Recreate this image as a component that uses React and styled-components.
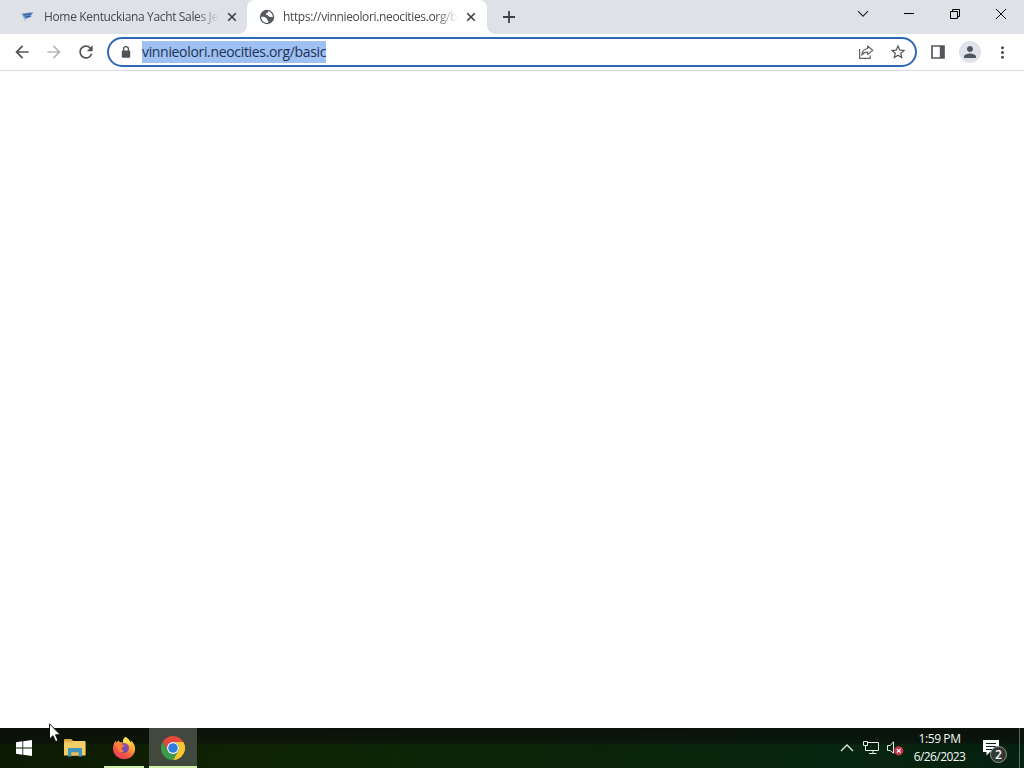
import React from "react";
import styled, { createGlobalStyle } from "styled-components";
import {
  MdArrowBack,
  MdArrowForward,
  MdMoreVert,
  MdPerson,
  MdRefresh,
  MdStarBorder,
} from "react-icons/md";

const CloseIcon = () => (
  <svg width="10" height="10" viewBox="0 0 10 10">
    <path d="M1.2 1.2L8.8 8.8M8.8 1.2L1.2 8.8" stroke="#3c4043" strokeWidth="1.6" />
  </svg>
);

const FlagIcon = () => (
  <svg width="16" height="16" viewBox="0 0 16 16">
    <path d="M1.5 4.4L13.6 3L11 6.4L11.6 7.8L5 10.2Z" fill="#7ba0cd" />
    <path d="M1.8 4.6L5.6 12" stroke="#a4b6cd" strokeWidth="0.9" />
    <path d="M3.4 6L11.4 4.8M5 8.2L10.4 7" stroke="#2f63a6" strokeWidth="1.5" />
  </svg>
);

const GlobeIcon = () => (
  <svg width="16" height="16" viewBox="0 0 16 16">
    <circle cx="8" cy="8" r="7.2" fill="#54585c" />
    <path d="M8.9 2C9.7 3.1 8.6 4 7.4 4.3C6.5 4.6 6.7 5.9 7.8 6.1C9.4 6.2 9.6 7.6 10.7 8C11.9 8.3 13.1 7.7 13.9 8.3C13.8 5.2 12 2.7 8.9 2Z" fill="#fff" />
    <path d="M2.1 7.8C3.9 7.7 6 7.9 7.3 9C8.3 9.9 7.9 10.9 8.9 11.4C9.7 11.9 9.6 13 8.7 13.9C5.1 14.2 2.2 11.5 2.1 7.8Z" fill="#fff" />
  </svg>
);

const LockIcon = () => (
  <svg width="14" height="14" viewBox="0 0 14 14">
    <path d="M4.6 6V4.1A2.4 2.4 0 0 1 9.4 4.1V6" fill="none" stroke="#505458" strokeWidth="1.3" />
    <rect x="2.8" y="5.4" width="8.4" height="7.4" rx="1" fill="#505458" />
  </svg>
);

const ShareIcon = () => (
  <svg width="18" height="18" viewBox="0 0 18 18" fill="none" stroke="#5f6368" strokeWidth="1.2">
    <path d="M2.6 6V15.3H13.2V12.6" />
    <path d="M10.6 3L15.7 7.3L10.6 11.6V9.2C7.8 9.1 6 10 4.7 12.1C5.1 8.6 7 6 10.6 5.5Z" strokeLinejoin="round" />
  </svg>
);

const SidePanelIcon = () => (
  <svg width="16" height="16" viewBox="0 0 16 16">
    <path d="M2 2H14V14H2Z" fill="none" stroke="#54585c" strokeWidth="1.7" />
    <path d="M9.8 2H14V14H9.8Z" fill="#54585c" />
  </svg>
);

const WindowsIcon = () => (
  <svg width="16" height="16" viewBox="0 0 16 16" fill="#fff">
    <path d="M0 2.2L6.4 1.3V7.6H0ZM7.2 1.2L16 0V7.6H7.2ZM0 8.4H6.4V14.7L0 13.8ZM7.2 8.4H16V16L7.2 14.8Z" />
  </svg>
);

const FolderIcon = () => (
  <svg width="24" height="20" viewBox="0 0 24 20">
    <path d="M1 3V1.8Q1 1 1.8 1H8.2L10.2 3Z" fill="#dba63e" />
    <path d="M1 3H21.8Q22.6 3 22.6 3.8V17.6H1Z" fill="#f3cd66" />
    <path d="M1 3H10.2L9 4.4H1Z" fill="#e6b54c" />
    <path d="M5 18.6V11Q5 10 6 10H18Q19 10 19 11V18.6H15.4V14.6H8.6V18.6Z" fill="#4395be" />
    <path d="M8.6 14.6H15.4V17.6H8.6Z" fill="#e9bd50" />
  </svg>
);

const FirefoxIcon = () => (
  <svg width="24" height="24" viewBox="0 0 24 24">
    <defs>
      <linearGradient id="flame" x1="0.85" y1="0" x2="0.25" y2="1">
        <stop offset="0" stopColor="#ffe14a" />
        <stop offset="0.4" stopColor="#ffa035" />
        <stop offset="0.72" stopColor="#f6543f" />
        <stop offset="1" stopColor="#e0386a" />
      </linearGradient>
      <linearGradient id="sphere" x1="0.8" y1="0" x2="0.3" y2="1">
        <stop offset="0" stopColor="#a24fa5" />
        <stop offset="1" stopColor="#5b4bb5" />
      </linearGradient>
    </defs>
    <path
      d="M13.2 1C16.6 2.3 17.6 4.6 18 6.6C18.9 6.2 18.9 5.2 18.8 4.5C21.6 6.7 23.3 9.7 23.1 13.2C22.8 19.2 18 23.2 12.2 23.2C5.8 23.2 1 18.4 1 12.6C1 9.5 2 6.8 3.8 4.4C3.8 5.3 4 6 4.5 6.7C5 5.8 5.8 5 6.9 4.3C6.9 5.3 7.3 6 8 6.5C9.2 6.2 10.1 6.3 11 6.6C10.8 4.5 11.6 2.4 13.2 1Z"
      fill="url(#flame)"
    />
    <circle cx="12" cy="12" r="5" fill="url(#sphere)" />
    <path d="M4.6 8.3C7.1 6.7 9.5 7.7 10.8 9.2L12.8 9.6C12.1 10.9 10.6 11 9.6 11.8C9.2 13.5 10.4 14.6 12.2 14.6C10.6 17 6.7 16.8 5.9 13.2Z" fill="#f8803a" />
    <path d="M13.2 1C16.6 2.3 19.4 6.4 19.4 10.7C17.6 7 13.9 7.4 11 6.6C10.8 4.5 11.6 2.4 13.2 1Z" fill="#ffdc4a" />
  </svg>
);

const ChromeIcon = () => (
  <svg width="24" height="24" viewBox="0 0 24 24">
    <path d="M1.6 6A12 12 0 0 1 22.4 6L12 6A6 6 0 0 0 6.8 15Z" fill="#e5493c" />
    <path d="M22.4 6A12 12 0 0 1 12 24L17.2 15A6 6 0 0 0 12 6Z" fill="#f7c52c" />
    <path d="M12 24A12 12 0 0 1 1.6 6L6.8 15A6 6 0 0 0 17.2 15Z" fill="#3a9c4c" />
    <circle cx="12" cy="12" r="6" fill="#fff" />
    <circle cx="12" cy="12" r="4.8" fill="#2f7de1" />
  </svg>
);

const NetworkIcon = () => (
  <svg width="18" height="16" viewBox="0 0 18 16" fill="none" stroke="#e8ece9">
    <path d="M5.5 2.5H16.5V10.5H5.5M11 10.5V13.5M7 13.5H14.5" />
    <path d="M1.5 1.5H5.5V5.5H1.5ZM3.5 5.5V10.5H6" />
  </svg>
);

const VolumeIcon = () => (
  <svg width="18" height="18" viewBox="0 0 18 18">
    <path d="M1.5 6.5H4.2L7.5 2.8V14.2L4.2 11.5H1.5Z" fill="none" stroke="#e8ece9" />
    <circle cx="12.7" cy="11.8" r="4.6" fill="#c93446" />
    <path d="M10.9 10L14.5 13.6M14.5 10L10.9 13.6" stroke="#fff" strokeWidth="1.1" />
  </svg>
);

const NotesIcon = () => (
  <svg width="18" height="17" viewBox="0 0 18 17">
    <path d="M1 1H17V13H8L4.5 16.5V13H1Z" fill="#fff" />
    <path d="M4 4.5H14M4 7.5H14M4 10.5H11" stroke="#08230f" />
  </svg>
);

const App = () => (
  <>
    <GlobalStyle />
    <Desktop>
      <TabStrip>
        <Tab>
          <FlagIcon />
          <TabTitle>Home Kentuckiana Yacht Sales Je</TabTitle>
          <TabClose aria-label="close tab"><CloseIcon /></TabClose>
        </Tab>
        <Tab $active>
          <GlobeIcon />
          <TabTitle>https://vinnieolori.neocities.org/b</TabTitle>
          <TabClose aria-label="close tab"><CloseIcon /></TabClose>
        </Tab>
        <NewTab aria-label="new tab">
          <svg width="12" height="12" viewBox="0 0 12 12">
            <path d="M6 0V12M0 6H12" stroke="#3c4043" strokeWidth="1.8" />
          </svg>
        </NewTab>
        <WindowControls>
          <WindowButton aria-label="search tabs">
            <svg width="12" height="12" viewBox="0 0 12 12">
              <path d="M1 3.2L6 8.2L11 3.2" fill="none" stroke="#222" strokeWidth="1.1" />
            </svg>
          </WindowButton>
          <WindowButton aria-label="minimize">
            <svg width="10" height="10" viewBox="0 0 10 10">
              <path d="M0 4.5H10" stroke="#000" />
            </svg>
          </WindowButton>
          <WindowButton aria-label="restore">
            <svg width="10" height="10" viewBox="0 0 10 10">
              <path d="M0.5 2.5H7.5V9.5H0.5ZM2.5 2.5V0.5H9.5V7.5H7.5" fill="none" stroke="#000" />
            </svg>
          </WindowButton>
          <WindowButton aria-label="close">
            <svg width="10" height="10" viewBox="0 0 10 10">
              <path d="M0 0L10 10M10 0L0 10" stroke="#000" />
            </svg>
          </WindowButton>
        </WindowControls>
      </TabStrip>

      <Toolbar>
        <ToolButton><MdArrowBack size={20} /></ToolButton>
        <ToolButton $muted><MdArrowForward size={20} /></ToolButton>
        <ToolButton><MdRefresh size={20} /></ToolButton>
        <AddressBar>
          <LockSlot><LockIcon /></LockSlot>
          <Address><Selected>vinnieolori.neocities.org/basic</Selected></Address>
          <ToolButton><ShareIcon /></ToolButton>
          <ToolButton><MdStarBorder size={18} /></ToolButton>
        </AddressBar>
        <ToolButton><SidePanelIcon /></ToolButton>
        <ToolButton><Avatar><MdPerson size={18} /></Avatar></ToolButton>
        <ToolButton><MdMoreVert size={19} /></ToolButton>
      </Toolbar>

      <Page />

      <Taskbar>
        <StartButton><WindowsIcon /></StartButton>
        <TaskButton><FolderIcon /></TaskButton>
        <TaskButton $running><FirefoxIcon /></TaskButton>
        <TaskButton $active><ChromeIcon /></TaskButton>
        <Tray>
          <TrayItem>
            <svg width="14" height="8" viewBox="0 0 14 8">
              <path d="M1 7L7 1L13 7" fill="none" stroke="#e8ece9" strokeWidth="1.3" />
            </svg>
          </TrayItem>
          <TrayItem><NetworkIcon /></TrayItem>
          <TrayItem><VolumeIcon /></TrayItem>
          <Clock>
            <ClockLine $spacing="-0.4px">1:59 PM</ClockLine>
            <ClockLine $spacing="-0.6px">6/26/2023</ClockLine>
          </Clock>
          <Notifications>
            <NotesIcon />
            <Badge>2</Badge>
          </Notifications>
          <ShowDesktop />
        </Tray>
      </Taskbar>

      <Cursor width="13" height="20" viewBox="0 0 13 20">
        <path d="M0.5 0.8V16L4 12.7L6.6 18.6L9 17.5L6.5 11.8H11.3Z" fill="#fff" stroke="#111" />
      </Cursor>
    </Desktop>
  </>
);

export default App;

const GlobalStyle = createGlobalStyle`
  * {
    box-sizing: border-box;
  }
  body {
    margin: 0;
    overflow: hidden;
    font-family: "Open Sans", "Noto Sans", sans-serif;
  }
  svg {
    display: block;
    flex-shrink: 0;
  }
  button {
    border: none;
    padding: 0;
    background: transparent;
    font: inherit;
  }
`;

const Desktop = styled.div`
  position: relative;
  display: flex;
  flex-direction: column;
  width: 1024px;
  height: 768px;
  background-color: #fefffe;
`;

const TabStrip = styled.div`
  display: flex;
  height: 34px;
  background-color: #dee1e6;
`;

const Tab = styled.div`
  position: relative;
  display: flex;
  align-items: center;
  width: ${(props) => (props.$active ? "240px" : "247px")};
  height: 34px;
  padding-left: ${(props) => (props.$active ? "12px" : "20px")};
  padding-right: ${(props) => (props.$active ? "8px" : "7px")};
  border-radius: 8px 8px 0 0;
  background-color: ${(props) => (props.$active ? "#fff" : "transparent")};
  &::before,
  &::after {
    content: "";
    display: ${(props) => (props.$active ? "block" : "none")};
    position: absolute;
    bottom: 0;
    width: 8px;
    height: 8px;
  }
  &::before {
    left: -8px;
    background: radial-gradient(circle at 0 0, transparent 7.5px, #fff 8px);
  }
  &::after {
    right: -8px;
    background: radial-gradient(circle at 100% 0, transparent 7.5px, #fff 8px);
  }
`;

const TabTitle = styled.span`
  flex: 1;
  margin-left: 8px;
  white-space: nowrap;
  font-size: 12px;
  line-height: 18px;
  letter-spacing: -0.35px;
  color: #45494d;
  mask-image: linear-gradient(to right, #000 calc(100% - 22px), transparent);
`;

const TabClose = styled.button`
  display: flex;
  align-items: center;
  justify-content: center;
  width: 16px;
  height: 16px;
  margin-left: 5px;
`;

const NewTab = styled.button`
  display: flex;
  align-items: center;
  justify-content: center;
  width: 28px;
  height: 34px;
  margin-left: 8px;
`;

const WindowControls = styled.div`
  display: flex;
  margin-left: auto;
`;

const WindowButton = styled.button`
  display: flex;
  align-items: center;
  justify-content: center;
  width: 46px;
  height: 28px;
`;

const Toolbar = styled.div`
  display: flex;
  align-items: center;
  height: 37px;
  padding: 0 6px;
  background-color: #fff;
  border-bottom: 1px solid #dadce0;
`;

const ToolButton = styled.button`
  display: flex;
  align-items: center;
  justify-content: center;
  width: 32px;
  height: 28px;
  flex-shrink: 0;
  color: ${(props) => (props.$muted ? "#b4b6b9" : "#505458")};
`;

const AddressBar = styled.div`
  display: flex;
  align-items: center;
  width: 810px;
  height: 30px;
  margin: 0 5px;
  padding-right: 1px;
  border: 2px solid #3069b3;
  border-radius: 15px;
  background-color: #fff;
`;

const LockSlot = styled.span`
  display: flex;
  width: 33px;
  padding-left: 10px;
`;

const Address = styled.div`
  flex: 1;
  font-size: 14px;
  line-height: 22px;
  letter-spacing: -0.33px;
  color: #1d3350;
`;

const Selected = styled.span`
  display: inline-block;
  height: 22px;
  background-color: #9fc0f3;
`;

const Avatar = styled.span`
  display: flex;
  align-items: center;
  justify-content: center;
  width: 22px;
  height: 22px;
  border-radius: 50%;
  background-color: #dfe2e8;
  color: #4c5561;
`;

const Page = styled.main`
  flex: 1;
  background-color: #fefffe;
`;

const Taskbar = styled.div`
  display: flex;
  height: 40px;
  background: linear-gradient(to bottom, rgba(10, 12, 10, 0.75) 0, rgba(10, 12, 10, 0.55) 15px, transparent 17px),
    linear-gradient(to right, #0c1a04 0, #102204 220px, #0b2606 420px, #092409 600px, #07260f 830px, #06200f 1024px);
`;

const StartButton = styled.button`
  display: flex;
  align-items: center;
  justify-content: center;
  width: 48px;
  height: 40px;
  margin-right: 3px;
`;

const TaskButton = styled.button`
  display: flex;
  align-items: center;
  justify-content: center;
  width: 48px;
  height: 40px;
  margin-right: 1px;
  background-color: ${(props) => (props.$active ? "#41493f" : "transparent")};
  background-image: ${(props) =>
    props.$active || props.$running ? "linear-gradient(#cdf0a6, #cdf0a6)" : "none"};
  background-repeat: no-repeat;
  background-position: center bottom;
  background-size: ${(props) => (props.$active ? "48px 2px" : "40px 2px")};
`;

const Tray = styled.div`
  display: flex;
  margin-left: auto;
`;

const TrayItem = styled.div`
  display: flex;
  align-items: center;
  justify-content: center;
  width: 24px;
  height: 40px;
`;

const Clock = styled.div`
  display: flex;
  flex-direction: column;
  align-items: center;
  width: 65px;
  padding-top: 2px;
  color: #f4f7f4;
`;

const ClockLine = styled.span`
  height: 18px;
  font-size: 12px;
  line-height: 18px;
  white-space: nowrap;
  letter-spacing: ${(props) => props.$spacing};
`;

const Notifications = styled.div`
  position: relative;
  width: 47px;
  height: 40px;
  padding: 11px 0 0 10px;
`;

const Badge = styled.span`
  position: absolute;
  left: 18px;
  top: 18px;
  display: flex;
  align-items: center;
  justify-content: center;
  width: 17px;
  height: 17px;
  border: 1px solid #8f9691;
  border-radius: 50%;
  background-color: #303a33;
  color: #fff;
  font-size: 12px;
  font-weight: 600;
`;

const ShowDesktop = styled.div`
  width: 5px;
  height: 40px;
  border-left: 1px solid #56675c;
`;

const Cursor = styled.svg`
  position: absolute;
  left: 49px;
  top: 723px;
`;
